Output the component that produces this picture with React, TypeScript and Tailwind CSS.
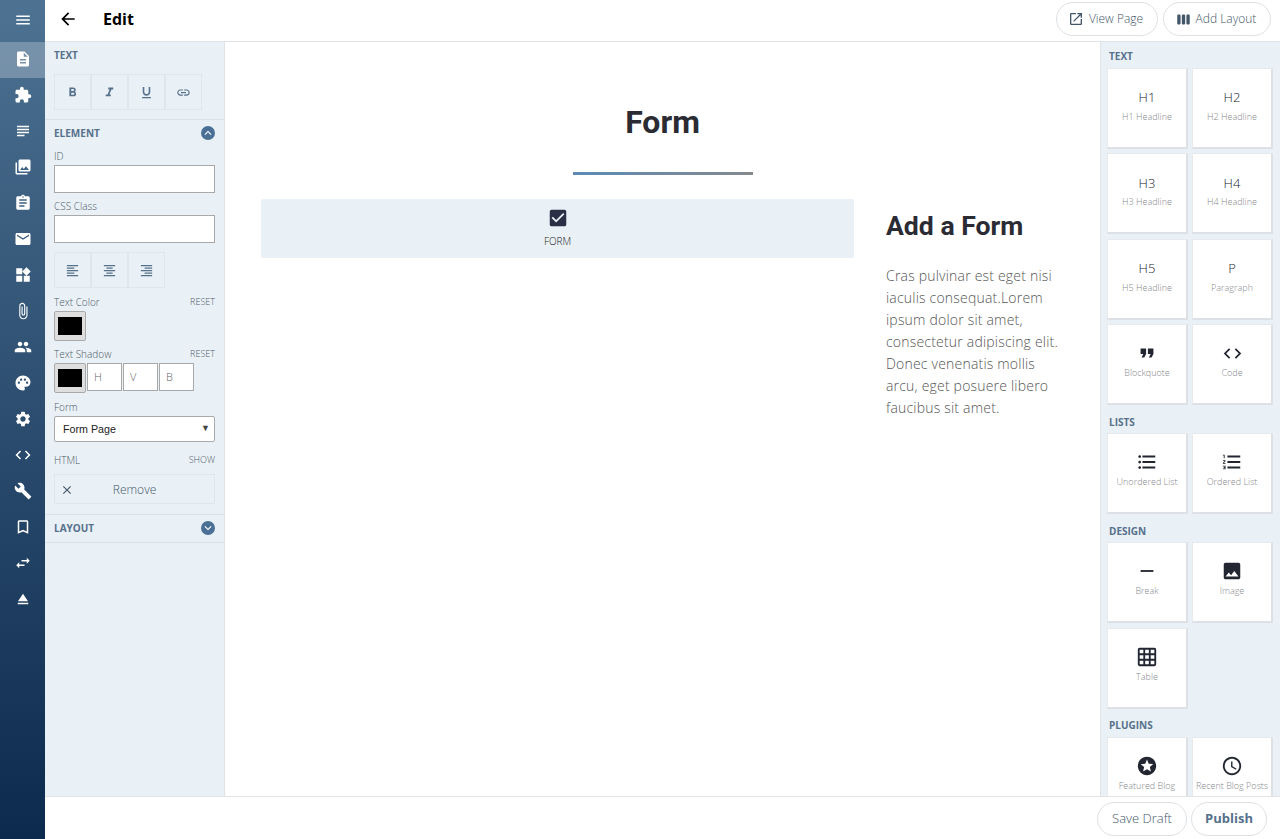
import type { ReactNode } from "react";
import {
  MdAccessTime, MdArrowBack, MdAssignment, MdAttachFile, MdBookmarkBorder, MdBuild, MdCheckBox, MdClose, MdCode,
  MdDescription, MdEject, MdExpandLess, MdExpandMore, MdExtension, MdFormatAlignCenter,
  MdFormatAlignLeft, MdFormatAlignRight, MdFormatBold, MdFormatItalic, MdFormatListBulleted, MdFormatListNumbered,
  MdFormatQuote, MdFormatUnderlined, MdGridOn, MdImage, MdLink, MdMail, MdMenu, MdOpenInNew, MdPalette, MdPeople,
  MdPhotoLibrary, MdRemove, MdSettings, MdStars, MdSubject, MdSwapHoriz, MdViewWeek, MdWidgets,
} from "react-icons/md";

const navIcons = [
  MdDescription, MdExtension, MdSubject, MdPhotoLibrary, MdAssignment, MdMail, MdWidgets, MdAttachFile,
  MdPeople, MdPalette, MdSettings, MdCode, MdBuild, MdBookmarkBorder, MdSwapHoriz, MdEject,
];

function SectionLabel({ children, className = "" }: { children: ReactNode; className?: string }) {
  return <p className={`text-[10px] leading-[14px] font-bold uppercase text-[#56718c] ${className}`}>{children}</p>;
}

function FieldLabel({ label, action }: { label: string; action?: string }) {
  return (
    <div className="flex items-end justify-between text-[10px] leading-[14px] font-light text-[#4f5b66]">
      <span>{label}</span>
      {action ? <span className="text-[9px] uppercase">{action}</span> : null}
    </div>
  );
}

function ToolButton({ children }: { children: ReactNode }) {
  return (
    <button className="flex h-[36px] w-[37px] items-center justify-center border border-[#dfe6ec] text-[15px] text-[#56718c]">
      {children}
    </button>
  );
}

function Swatch() {
  return (
    <div className="flex h-[30px] w-[32px] shrink-0 items-center justify-center rounded-[2px] border border-[#a9a9a9] bg-[#dedede]">
      <div className="h-[18px] w-[24px] bg-black" />
    </div>
  );
}

function Tile({ icon, label }: { icon: ReactNode; label: string }) {
  return (
    <div className="flex h-[81px] flex-col items-center overflow-hidden border border-[#e6eaed] border-r-2 border-b-2 border-r-[#dde1e5] border-b-[#dde1e5] bg-white pt-[19px] text-center">
      <div className="flex h-[20px] items-center justify-center text-[13px] font-light text-[#222630] antialiased [&>svg]:-translate-y-px">{icon}</div>
      <p className="mt-[1px] text-[9px] leading-[15px] font-light text-[#85888c]">{label}</p>
    </div>
  );
}

function PillButton({ children, className = "" }: { children: ReactNode; className?: string }) {
  return (
    <button className={`flex h-[34px] items-center justify-center rounded-full border border-[#dde2e6] bg-white text-[#44576a] ${className}`}>
      {children}
    </button>
  );
}

export default function App() {
  return (
    <div className="flex h-[839px] w-[1280px] overflow-hidden bg-white text-[#333]" style={{ fontFamily: '"Open Sans", sans-serif' }}>
      {/* Nav */}
      <aside className="flex w-[45px] shrink-0 flex-col items-center bg-linear-to-b from-[#4d7292] to-[#0c2a4d] text-white">
        <div className="flex h-[42px] w-full items-center justify-center pb-[3px]">
          <MdMenu size={18} />
        </div>
        {navIcons.map((Icon, i) => (
          <div key={i} className={`flex h-[36px] w-full items-center justify-center pb-[2px] ${i === 0 ? "bg-white/25" : ""}`}>
            <Icon size={18} />
          </div>
        ))}
      </aside>

      <div className="flex min-w-0 flex-1 flex-col">
        {/* Top bar */}
        <header className="flex h-[42px] shrink-0 items-center border-b border-[#dfe3e6] pr-[9px] pb-[3px]">
          <MdArrowBack size={20} className="ml-[13px] text-black" />
          <h1 className="ml-[25px] text-[16px] font-bold text-black">Edit</h1>
          <div className="ml-auto flex gap-[5px]">
            <PillButton className="w-[102px] gap-[5px] pr-[3px] text-[12px] font-light"><MdOpenInNew size={16} />View Page</PillButton>
            <PillButton className="w-[108px] gap-[5px] pr-[2px] text-[12px] font-light"><MdViewWeek size={15} />Add Layout</PillButton>
          </div>
        </header>

        <div className="flex min-h-0 flex-1">
          {/* Left panel */}
          <section className="w-[180px] shrink-0 border-r border-[#dfe3e6] bg-[#e9f0f6]">
            <div className="border-b border-[#d9e0e6] px-[9px] pt-[6px] pb-[9px]">
              <SectionLabel>Text</SectionLabel>
              <div className="mt-[12px] flex">
                <ToolButton><MdFormatBold /></ToolButton>
                <ToolButton><MdFormatItalic /></ToolButton>
                <ToolButton><MdFormatUnderlined /></ToolButton>
                <ToolButton><MdLink /></ToolButton>
              </div>
            </div>
            <div className="border-b border-[#d9e0e6] px-[9px] pt-[6px] pb-[10px]">
              <div className="flex items-center justify-between">
                <SectionLabel>Element</SectionLabel>
                <span className="flex size-[14px] items-center justify-center rounded-full bg-[#4a7195] text-white"><MdExpandLess size={14} /></span>
              </div>
              <div className="mt-[9px]"><FieldLabel label="ID" /></div>
              <input className="mt-[2px] block h-[28px] w-full border border-[#a9a9a9] bg-white" />
              <div className="mt-[6px]"><FieldLabel label="CSS Class" /></div>
              <input className="mt-[2px] block h-[28px] w-full border border-[#a9a9a9] bg-white" />
              <div className="mt-[9px] flex">
                <ToolButton><MdFormatAlignLeft /></ToolButton>
                <ToolButton><MdFormatAlignCenter /></ToolButton>
                <ToolButton><MdFormatAlignRight /></ToolButton>
              </div>
              <div className="mt-[7px]"><FieldLabel label="Text Color" action="Reset" /></div>
              <div className="mt-[2px]"><Swatch /></div>
              <div className="mt-[6px]"><FieldLabel label="Text Shadow" action="Reset" /></div>
              <div className="mt-[2px] flex">
                <Swatch />
                {["H", "V", "B"].map((p) => (
                  <div key={p} className="ml-px flex h-[28px] w-[35px] items-center border border-[#a9a9a9] bg-white pl-[6px] text-[11px] font-light text-[#666]">{p}</div>
                ))}
              </div>
              <div className="mt-[7px]"><FieldLabel label="Form" /></div>
              <div className="mt-[2px] flex h-[26px] items-center justify-between rounded-[2px] border border-[#a9a9a9] bg-white pr-[4px] pl-[8px] text-[10.7px] text-[#222]" style={{ fontFamily: '"Liberation Sans", sans-serif' }}>
                Form Page
                <span className="text-[9px] text-[#444]">▼</span>
              </div>
              <div className="mt-[11px]"><FieldLabel label="HTML" action="Show" /></div>
              <div className="relative mt-[7px] flex h-[30px] items-center justify-center border border-[#dfe6ec] pt-px text-[12px] font-light text-[#44576a]">
                <MdClose size={14} className="absolute left-[5px]" />
                Remove
              </div>
            </div>
            <div className="flex h-[28px] items-center justify-between border-b border-[#d9e0e6] px-[9px] pb-px">
              <SectionLabel>Layout</SectionLabel>
              <span className="flex size-[14px] items-center justify-center rounded-full bg-[#4a7195] text-white"><MdExpandMore size={14} /></span>
            </div>
          </section>

          {/* Page canvas */}
          <main className="min-w-0 flex-1 px-[36px]">
            <h2 className="mt-[60px] text-center text-[32px] leading-[40px] font-bold text-[#2b2b33]" style={{ fontFamily: "Roboto, sans-serif" }}>Form</h2>
            <div className="mx-auto mt-[30px] h-[3px] w-[180px] bg-linear-to-r from-[#5a8ab5] to-[#85898d]" />
            <div className="mt-[24px] flex gap-[32px]">
              <div className="flex h-[59px] w-[593px] shrink-0 flex-col items-center rounded-[2px] bg-[#e9f0f6] pt-[8px]">
                <MdCheckBox size={22} className="text-[#2a2f45]" />
                <span className="mt-[5px] text-[10px] leading-[14px] font-light text-[#222]">FORM</span>
              </div>
              <div className="min-w-0 flex-1">
                <h3 className="pt-px text-[26.6px] leading-[52px] font-bold text-[#2b2b33]" style={{ fontFamily: "Roboto, sans-serif" }}>Add a Form</h3>
                <p className="mt-[13px] text-[14px] leading-[22px] font-light tracking-[0.2px] text-[#555]">
                  Cras pulvinar est eget nisi iaculis consequat.Lorem ipsum dolor sit amet, consectetur adipiscing elit. Donec venenatis mollis arcu, eget posuere libero faucibus sit amet.
                </p>
              </div>
            </div>
          </main>

          {/* Block palette */}
          <section className="w-[180px] shrink-0 overflow-hidden border-l border-[#dfe3e6] bg-[#e9f0f6] pr-[7px] pl-[6px]">
            <SectionLabel className="mt-[7px] ml-[2px]">Text</SectionLabel>
            <div className="mt-[5px] grid grid-cols-2 gap-x-[4px] gap-y-[4.4px]">
              {["H1", "H2", "H3", "H4", "H5"].map((h) => (
                <Tile key={h} icon={h} label={`${h} Headline`} />
              ))}
              <Tile icon="P" label="Paragraph" />
              <Tile icon={<MdFormatQuote size={22} />} label="Blockquote" />
              <Tile icon={<MdCode size={21} />} label="Code" />
            </div>
            <SectionLabel className="mt-[9.5px] ml-[2px]">Lists</SectionLabel>
            <div className="mt-[4px] grid grid-cols-2 gap-[4px]">
              <Tile icon={<MdFormatListBulleted size={22} />} label="Unordered List" />
              <Tile icon={<MdFormatListNumbered size={22} />} label="Ordered List" />
            </div>
            <SectionLabel className="mt-[10px] ml-[2px]">Design</SectionLabel>
            <div className="mt-[4px] grid grid-cols-2 gap-x-[4px] gap-y-[5px]">
              <Tile icon={<MdRemove size={22} />} label="Break" />
              <Tile icon={<MdImage size={22} />} label="Image" />
              <Tile icon={<MdGridOn size={22} />} label="Table" />
            </div>
            <SectionLabel className="mt-[9px] ml-[2px]">Plugins</SectionLabel>
            <div className="mt-[5px] grid grid-cols-2 gap-[4px]">
              <Tile icon={<MdStars size={22} />} label="Featured Blog Posts" />
              <Tile icon={<MdAccessTime size={22} />} label="Recent Blog Posts" />
            </div>
          </section>
        </div>

        {/* Footer */}
        <footer className="flex h-[43px] shrink-0 items-center justify-end gap-[4px] border-t border-[#dfe3e6] bg-white pt-[2px] pr-[13px]">
          <PillButton className="w-[90px] text-[13px] font-light">Save Draft</PillButton>
          <PillButton className="w-[76px] text-[13px] font-bold text-[#56718c]">Publish</PillButton>
        </footer>
      </div>
    </div>
  );
}
